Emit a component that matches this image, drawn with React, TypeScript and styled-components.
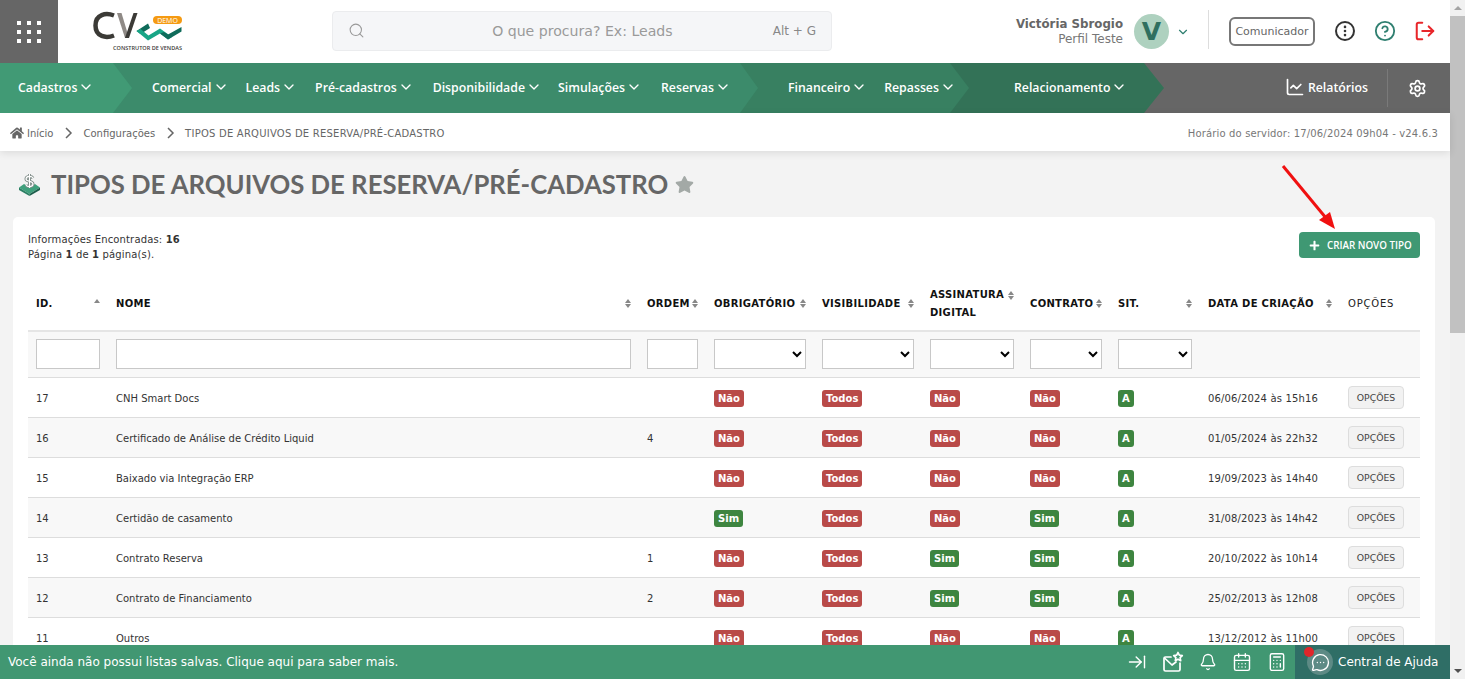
import React from "react";
import styled, { createGlobalStyle } from "styled-components";
import {
  ArrowRightToLine,
  Bell,
  Calculator,
  CalendarDays,
  ChartLine,
  ChevronDown,
  CircleHelp,
  EllipsisVertical,
  LogOut,
  MessageCircleMore,
  Search,
  Settings,
} from "lucide-react";
import { FaHome, FaPlus, FaStar } from "react-icons/fa";

const Global = createGlobalStyle`
  html, body { margin: 0; padding: 0; height: 100%; overflow: hidden; }
  body { font-family: "DejaVu Sans", Verdana, sans-serif; color: #333; }
  * { box-sizing: border-box; }
`;

const Shell = styled.div`
  display: flex;
  width: 1465px;
  height: 679px;
  overflow: hidden;
`;

const Page = styled.div`
  width: 1450px;
  height: 679px;
  display: flex;
  flex-direction: column;
  background: #f3f3f3;
`;

const ScrollTrack = styled.div`
  width: 15px;
  background: #f1f1f1;
  display: flex;
  flex-direction: column;
  align-items: center;
`;

const ScrollButton = styled.div<{ $down?: boolean }>`
  height: 16px;
  width: 15px;
  display: flex;
  align-items: center;
  justify-content: center;
  flex: none;
  margin-top: ${(p) => (p.$down ? "330px" : "0")};
  &::before {
    content: "";
    border-left: 4px solid transparent;
    border-right: 4px solid transparent;
    border-${(p) => (p.$down ? "top" : "bottom")}: 4px solid ${(p) => (p.$down ? "#505050" : "#a3a3a3")};
  }
`;

const ScrollThumb = styled.div`
  width: 15px;
  height: 317px;
  flex: none;
  background: #c1c1c1;
`;

const TopBar = styled.header`
  height: 63px;
  flex: none;
  display: flex;
  align-items: center;
  background: #fff;
`;

const GridButton = styled.div`
  width: 58px;
  height: 63px;
  flex: none;
  background: #666;
  display: grid;
  grid-template-columns: repeat(3, 4px);
  grid-auto-rows: 4px;
  gap: 5px 6px;
  align-content: center;
  justify-content: center;
`;

const GridDot = styled.span`
  background: #fff;
`;

const LogoBox = styled.div`
  width: 274px;
  flex: none;
  padding-left: 30px;
  display: flex;
`;

const SearchBox = styled.div`
  width: 500px;
  height: 40px;
  flex: none;
  margin-top: -2px;
  display: flex;
  align-items: center;
  padding: 0 15px;
  background: #f5f6f8;
  border: 1px solid #ebecee;
  border-radius: 4px;
  color: #999;
`;

const SearchText = styled.span`
  flex: 1;
  text-align: center;
  font-size: 14.1px;
  padding-left: 27px;
  color: #9a9a9a;
`;

const SearchKey = styled.span`
  font-size: 12px;
  color: #888;
`;

const UserArea = styled.div`
  flex: 1;
  display: flex;
  align-items: center;
  justify-content: flex-end;
  padding-right: 14px;
`;

const UserText = styled.div`
  text-align: right;
  line-height: 15px;
`;

const UserName = styled.div`
  font-size: 11.8px;
  font-weight: 700;
  color: #666;
`;

const UserRole = styled.div`
  font-size: 12px;
  color: #777;
`;

const Avatar = styled.div`
  width: 35px;
  height: 35px;
  border-radius: 50%;
  margin: 0 7px 0 11px;
  background: #aed1bf;
  color: #2f6f5f;
  font-size: 25px;
  font-weight: 700;
  display: flex;
  align-items: center;
  justify-content: center;
`;

const Divider = styled.div`
  width: 1px;
  height: 39px;
  background: #ddd;
  margin: -4px 20px 0 18px;
`;

const ComButton = styled.div`
  width: 86px;
  height: 29px;
  border: 2px solid #777;
  border-radius: 6px;
  color: #666;
  font-size: 11px;
  display: flex;
  align-items: center;
  justify-content: center;
  white-space: nowrap;
`;

const IconRow = styled.div`
  display: flex;
  align-items: center;
  gap: 18px;
  margin: -2px 0 0 19px;
`;

const DotsCircle = styled.div`
  width: 20px;
  height: 20px;
  margin: 0 1px;
  border: 2px solid #333;
  border-radius: 50%;
  display: flex;
  align-items: center;
  justify-content: center;
  color: #333;
`;

const NavBar = styled.nav`
  height: 50px;
  flex: none;
  display: flex;
  background: #666;
  color: #fff;
`;

const NavSegment = styled.div<{ $width: number; $pad: number; $bg: string; $tip: number; $z: number }>`
  position: relative;
  z-index: ${(p) => p.$z};
  width: ${(p) => p.$width}px;
  flex: none;
  padding-left: ${(p) => p.$pad}px;
  padding-bottom: 2px;
  background: ${(p) => p.$bg};
  display: flex;
  align-items: center;
  &::after {
    content: "";
    position: absolute;
    left: 100%;
    top: 0;
    border-top: 25px solid transparent;
    border-bottom: 25px solid transparent;
    border-left: ${(p) => p.$tip}px solid ${(p) => p.$bg};
  }
`;

const NavItem = styled.div<{ $mr?: number }>`
  display: flex;
  flex: none;
  align-items: center;
  margin-right: ${(p) => p.$mr ?? 0}px;
  font-family: "Open Sans", sans-serif;
  font-size: 12.3px;
  font-weight: 600;
  white-space: nowrap;
  position: relative;
  z-index: 1;
  svg {
    flex: none;
    margin: 0 -1px 0 1px;
  }
`;

const NavRight = styled.div`
  flex: 1;
  display: flex;
  justify-content: flex-end;
  align-items: center;
`;

const ReportLink = styled.div`
  display: flex;
  align-items: center;
  gap: 3px;
  padding: 0 19px 2px 0;
  font-family: "Open Sans", sans-serif;
  font-size: 12.3px;
  font-weight: 600;
`;

const SettingsCell = styled.div`
  width: 63px;
  height: 38px;
  border-left: 1px solid #7a7a7a;
  padding-right: 3px;
  display: flex;
  align-items: center;
  justify-content: center;
`;

const Crumbs = styled.div`
  height: 38px;
  flex: none;
  position: relative;
  z-index: 2;
  display: flex;
  align-items: center;
  padding: 2px 12px 0 10px;
  background: #fff;
  box-shadow: 0 2px 8px rgba(0, 0, 0, 0.1);
  font-size: 10px;
  color: #666;
`;

const CrumbSep = styled.span`
  display: inline-flex;
  margin: 0 9px;
  color: #666;
`;

const CrumbHome = styled.span`
  display: inline-flex;
  margin-right: 3px;
  color: #666;
`;

const CrumbTitle = styled.span`
  letter-spacing: 0.23px;
`;

const ServerTime = styled.span`
  margin-left: auto;
  letter-spacing: 0.15px;
  color: #777;
`;

const Content = styled.main`
  flex: 1;
  min-height: 0;
  overflow: hidden;
  position: relative;
  padding: 0 15px 0 13px;
`;

const TitleRow = styled.div`
  height: 66px;
  display: flex;
  align-items: center;
  padding: 0 0 0 5px;
`;

const Title = styled.h1`
  margin: 0 7px 0 10px;
  font-family: Lato, sans-serif;
  font-size: 25.7px;
  font-weight: 700;
  color: #666;
  white-space: nowrap;
`;

const StarMark = styled.span`
  display: inline-flex;
  color: #a3a9a6;
`;

const Card = styled.section`
  background: #fff;
  border-radius: 5px 5px 0 0;
  padding: 15px;
`;

const CardTop = styled.div`
  height: 45px;
  display: flex;
  justify-content: space-between;
  align-items: flex-start;
`;

const Info = styled.div`
  font-size: 10px;
  letter-spacing: 0.15px;
  line-height: 15px;
  color: #333;
`;

const CreateButton = styled.div`
  width: 121px;
  height: 26px;
  background: #3f9873;
  border-radius: 4px;
  color: #fff;
  display: flex;
  align-items: center;
  gap: 7px;
  padding-left: 10px;
  font-family: "Open Sans", sans-serif;
  font-size: 9.8px;
  font-weight: 600;
  white-space: nowrap;
`;

const Table = styled.table`
  width: 1392px;
  table-layout: fixed;
  border-collapse: collapse;
  font-size: 10px;
`;

const Th = styled.th<{ $muted?: boolean }>`
  height: 54px;
  padding: 0 8px;
  text-align: left;
  font-size: 10px;
  line-height: 18px;
  font-weight: ${(p) => (p.$muted ? 400 : 700)};
  letter-spacing: ${(p) => (p.$muted ? "0.8px" : "0.3px")};
  color: ${(p) => (p.$muted ? "#222" : "#111")};
  border-bottom: 2px solid #e5e5e5;
`;

const ThInner = styled.div<{ $top?: boolean }>`
  display: flex;
  justify-content: space-between;
  align-items: ${(p) => (p.$top ? "flex-start" : "center")};
`;

const SortMark = styled.span<{ $onlyUp?: boolean; $top?: boolean }>`
  display: inline-flex;
  flex-direction: column;
  gap: 1px;
  flex: none;
  margin-top: ${(p) => (p.$top ? "5px" : "0")};
  &::before {
    content: "";
    border-left: 3px solid transparent;
    border-right: 3px solid transparent;
    border-bottom: 4px solid #888;
  }
  &::after {
    content: "";
    border-left: 3px solid transparent;
    border-right: 3px solid transparent;
    border-top: 4px solid ${(p) => (p.$onlyUp ? "transparent" : "#888")};
  }
`;

const FilterRow = styled.tr`
  background: #f8f8f8;
`;

const FilterCell = styled.td`
  height: 46px;
  padding: 0 8px;
  border-bottom: 1px solid #ddd;
`;

const FilterInput = styled.input`
  display: block;
  width: 100%;
  height: 30px;
  padding: 0 4px;
  background: #fff;
  border: 1px solid #c8c8c8;
`;

const FilterSelect = styled.select`
  display: block;
  width: 100%;
  height: 30px;
  background: #fff;
  border: 1px solid #c8c8c8;
  border-radius: 0;
`;

const Row = styled.tr<{ $odd: boolean }>`
  background: ${(p) => (p.$odd ? "#f8f8f8" : "#fff")};
`;

const Td = styled.td`
  height: 40px;
  padding: 2px 8px 0;
  border-bottom: 1px solid #ddd;
  color: #333;
  white-space: nowrap;
`;

const DateText = styled.span`
  letter-spacing: 0.15px;
`;

const Badge = styled.span<{ $tone: "red" | "green" }>`
  display: inline-block;
  height: 17px;
  line-height: 17px;
  padding: 0 4px;
  border-radius: 3px;
  background: ${(p) => (p.$tone === "red" ? "#b94a48" : "#3e8540")};
  color: #fff;
  font-size: 10px;
  font-weight: 700;
  vertical-align: middle;
`;

const OptionsButton = styled.div`
  width: 56px;
  height: 23px;
  background: #f2f2f2;
  border: 1px solid #ddd;
  border-radius: 4px;
  color: #444;
  font-size: 9.3px;
  display: flex;
  align-items: center;
  justify-content: center;
  margin-top: -2px;
`;

const RedArrow = styled.svg`
  position: absolute;
  left: 1280px;
  top: 14px;
  pointer-events: none;
`;

const BottomBar = styled.footer`
  height: 34px;
  flex: none;
  display: flex;
  align-items: center;
  background: #419772;
  color: #fff;
`;

const SavedLists = styled.div`
  flex: 1;
  padding-left: 8px;
  font-size: 12px;
  white-space: nowrap;
`;

const BarIcons = styled.div`
  display: flex;
  align-items: center;
  gap: 15px;
  padding-right: 8px;
`;

const HelpBlock = styled.div`
  width: 155px;
  height: 34px;
  flex: none;
  position: relative;
  display: flex;
  align-items: center;
  gap: 5px;
  padding-left: 12px;
  background: #2f6e66;
  font-size: 12px;
  white-space: nowrap;
`;

const HelpCircle = styled.div`
  width: 26px;
  height: 26px;
  border-radius: 50%;
  background: #5d8a85;
  display: flex;
  align-items: center;
  justify-content: center;
`;

const RedDot = styled.span`
  position: absolute;
  left: 9px;
  top: 2px;
  width: 10px;
  height: 10px;
  border-radius: 50%;
  background: #e0262a;
`;

const Logo = () => (
  <svg width="100" height="46" viewBox="88 8 100 46" style={{ display: "block", marginTop: -2 }}>
    <path d="M114 15.500 C106 12.500 95.500 14 95.500 25.500 C95.500 37 106 38.500 114 35.500" fill="none" stroke="#3b3a36" strokeWidth="4.500" />
    <path d="M117 13 L125 38 L129 38 L121.500 13 Z" fill="#8f8a86" />
    <path d="M125 38 L129 38 L137.500 13 L133.500 13 Z" fill="#3b3a36" />
    <path d="M148 23.500 L136.500 31 L140.500 34 L150 28 Z" fill="#0f6b5a" />
    <path d="M136.500 31 L148 40.500 L160 33.500 L168 39.500 L172 37 L160 28.500 L148.500 35.500 L140.500 29 Z" fill="#17a586" />
    <path d="M168 39.500 L181.500 31.500 L181.500 27 L168 34.500 L164 32 L160 33.500 Z" fill="#0f6b5a" />
    <rect x="153" y="16" width="29" height="8" rx="4" fill="#f59a12" />
    <text x="167.500" y="22.700" textAnchor="middle" fontSize="7" fill="#fff" fontFamily="Open Sans, sans-serif">DEMO</text>
    <text x="113" y="49.500" textLength="69" lengthAdjust="spacingAndGlyphs" fontSize="5.500" fill="#3b3a36" fontFamily="Open Sans, sans-serif" fontWeight="600">CONSTRUTOR DE VENDAS</text>
  </svg>
);

const PageIcon = () => (
  <svg width="23" height="24" viewBox="0 0 23 24" style={{ display: "block" }}>
    <path d="M1 15.500 L6 12 L11.500 15 L17 12 L22 15.500 L11.500 22 Z" fill="#3fa07c" />
    <path d="M1 15.500 L11.500 22 L11.500 24 L1 18 Z" fill="#2a7f63" />
    <path d="M22 15.500 L11.500 22 L11.500 24 L22 18 Z" fill="#1d5f4c" />
    <path d="M15 6 C13.500 3.500 8 4 8 7 C8 10 15 8.500 15 12 C15 15 9.500 15.500 8 13 M11.500 2 L11.500 16" fill="none" stroke="#7d8a86" strokeWidth="3" />
    <path d="M15 6 C13.500 3.500 8 4 8 7 C8 10 15 8.500 15 12 C15 15 9.500 15.500 8 13 M11.500 2 L11.500 16" fill="none" stroke="#fff" strokeWidth="1.200" />
  </svg>
);

const MailStar = () => (
  <svg width="22" height="22" viewBox="0 0 22 22" fill="none" stroke="#fff" strokeWidth="1.700" strokeLinejoin="round" strokeLinecap="round">
    <path d="M9 6 H3.500 A1.500 1.500 0 0 0 2 7.500 V18.500 A1.500 1.500 0 0 0 3.500 20 H16.500 A1.500 1.500 0 0 0 18 18.500 V12" />
    <path d="M2.500 7 L10 14 L14 11" />
    <path d="M16 1.500 L17.300 4.200 L20.300 4.600 L18.100 6.700 L18.700 9.700 L16 8.200 L13.300 9.700 L13.900 6.700 L11.700 4.600 L14.700 4.200 Z" />
  </svg>
);

const CrumbChevron = () => (
  <svg width="12" height="12" viewBox="0 0 12 12" fill="none" stroke="#666" strokeWidth="1.500">
    <path d="M4 1 L9 6 L4 11" />
  </svg>
);

type RowData = {
  id: number;
  name: string;
  order: string;
  required: string;
  signature: string;
  contract: string;
  created: string;
};

const rows: RowData[] = [
  { id: 17, name: "CNH Smart Docs", order: "", required: "Não", signature: "Não", contract: "Não", created: "06/06/2024 às 15h16" },
  { id: 16, name: "Certificado de Análise de Crédito Liquid", order: "4", required: "Não", signature: "Não", contract: "Não", created: "01/05/2024 às 22h32" },
  { id: 15, name: "Baixado via Integração ERP", order: "", required: "Não", signature: "Não", contract: "Não", created: "19/09/2023 às 14h40" },
  { id: 14, name: "Certidão de casamento", order: "", required: "Sim", signature: "Não", contract: "Sim", created: "31/08/2023 às 14h42" },
  { id: 13, name: "Contrato Reserva", order: "1", required: "Não", signature: "Sim", contract: "Sim", created: "20/10/2022 às 10h14" },
  { id: 12, name: "Contrato de Financiamento", order: "2", required: "Não", signature: "Sim", contract: "Sim", created: "25/02/2013 às 12h08" },
  { id: 11, name: "Outros", order: "", required: "Não", signature: "Não", contract: "Não", created: "13/12/2012 às 11h00" },
];

const colWidths = [80, 531, 67, 108, 108, 100, 88, 90, 140, 80];

const YesNo = ({ value }: { value: string }) => <Badge $tone={value === "Sim" ? "green" : "red"}>{value}</Badge>;

const NavLink = ({ label, mr }: { label: string; mr?: number }) => (
  <NavItem $mr={mr}>
    {label}
    <ChevronDown size={16} strokeWidth={2} />
  </NavItem>
);

export default function App() {
  return (
    <Shell>
      <Global />
      <Page>
        <TopBar>
          <GridButton>
            {Array.from({ length: 9 }, (_, i) => (
              <GridDot key={i} />
            ))}
          </GridButton>
          <LogoBox>
            <Logo />
          </LogoBox>
          <SearchBox>
            <Search size={17} strokeWidth={1.5} />
            <SearchText>O que procura? Ex: Leads</SearchText>
            <SearchKey>Alt + G</SearchKey>
          </SearchBox>
          <UserArea>
            <UserText>
              <UserName>Victória Sbrogio</UserName>
              <UserRole>Perfil Teste</UserRole>
            </UserText>
            <Avatar>V</Avatar>
            <ChevronDown size={14} color="#2f7f70" strokeWidth={2} />
            <Divider />
            <ComButton>Comunicador</ComButton>
            <IconRow>
              <DotsCircle>
                <EllipsisVertical size={14} strokeWidth={2.5} />
              </DotsCircle>
              <CircleHelp size={22} color="#2f7f70" strokeWidth={2} />
              <LogOut size={22} color="#e8262a" strokeWidth={2.2} />
            </IconRow>
          </UserArea>
        </TopBar>

        <NavBar>
          <NavSegment $width={113} $pad={18} $bg="#419a75" $tip={19} $z={4}>
            <NavLink label="Cadastros" />
          </NavSegment>
          <NavSegment $width={627} $pad={39} $bg="#3c8b6b" $tip={18} $z={3}>
            <NavLink label="Comercial" mr={18} />
            <NavLink label="Leads" mr={19} />
            <NavLink label="Pré-cadastros" mr={20} />
            <NavLink label="Disponibilidade" mr={17} />
            <NavLink label="Simulações" mr={20} />
            <NavLink label="Reservas" />
          </NavSegment>
          <NavSegment $width={210} $pad={48} $bg="#388061" $tip={19} $z={2}>
            <NavLink label="Financeiro" mr={18} />
            <NavLink label="Repasses" />
          </NavSegment>
          <NavSegment $width={194} $pad={64} $bg="#337257" $tip={20} $z={1}>
            <NavLink label="Relacionamento" />
          </NavSegment>
          <NavRight>
            <ReportLink>
              <ChartLine size={20} strokeWidth={2} />
              Relatórios
            </ReportLink>
            <SettingsCell>
              <Settings size={19} strokeWidth={2.2} />
            </SettingsCell>
          </NavRight>
        </NavBar>

        <Crumbs>
          <CrumbHome>
            <FaHome size={14} />
          </CrumbHome>
          Início
          <CrumbSep>
            <CrumbChevron />
          </CrumbSep>
          Configurações
          <CrumbSep>
            <CrumbChevron />
          </CrumbSep>
          <CrumbTitle>TIPOS DE ARQUIVOS DE RESERVA/PRÉ-CADASTRO</CrumbTitle>
          <ServerTime>Horário do servidor: 17/06/2024 09h04 - v24.6.3</ServerTime>
        </Crumbs>

        <Content>
          <TitleRow>
            <PageIcon />
            <Title>TIPOS DE ARQUIVOS DE RESERVA/PRÉ-CADASTRO</Title>
            <StarMark>
              <FaStar size={19} />
            </StarMark>
          </TitleRow>

          <Card>
            <CardTop>
              <Info>
                Informações Encontradas: <b>16</b>
                <br />
                Página <b>1</b> de <b>1</b> página(s).
              </Info>
              <CreateButton>
                <FaPlus size={11} />
                CRIAR NOVO TIPO
              </CreateButton>
            </CardTop>

            <Table>
              <colgroup>
                {colWidths.map((w, i) => (
                  <col key={i} style={{ width: w }} />
                ))}
              </colgroup>
              <thead>
                <tr>
                  <Th>
                    <ThInner>
                      ID.
                      <SortMark $onlyUp />
                    </ThInner>
                  </Th>
                  <Th>
                    <ThInner>
                      NOME
                      <SortMark />
                    </ThInner>
                  </Th>
                  <Th>
                    <ThInner>
                      ORDEM
                      <SortMark />
                    </ThInner>
                  </Th>
                  <Th>
                    <ThInner>
                      OBRIGATÓRIO
                      <SortMark />
                    </ThInner>
                  </Th>
                  <Th>
                    <ThInner>
                      VISIBILIDADE
                      <SortMark />
                    </ThInner>
                  </Th>
                  <Th>
                    <ThInner $top>
                      <span>
                        ASSINATURA
                        <br />
                        DIGITAL
                      </span>
                      <SortMark $top />
                    </ThInner>
                  </Th>
                  <Th>
                    <ThInner>
                      CONTRATO
                      <SortMark />
                    </ThInner>
                  </Th>
                  <Th>
                    <ThInner>
                      SIT.
                      <SortMark />
                    </ThInner>
                  </Th>
                  <Th>
                    <ThInner>
                      DATA DE CRIAÇÃO
                      <SortMark />
                    </ThInner>
                  </Th>
                  <Th $muted>OPÇÕES</Th>
                </tr>
                <FilterRow>
                  <FilterCell>
                    <FilterInput />
                  </FilterCell>
                  <FilterCell>
                    <FilterInput />
                  </FilterCell>
                  <FilterCell>
                    <FilterInput />
                  </FilterCell>
                  {[0, 1, 2, 3, 4].map((i) => (
                    <FilterCell key={i}>
                      <FilterSelect />
                    </FilterCell>
                  ))}
                  <FilterCell />
                  <FilterCell />
                </FilterRow>
              </thead>
              <tbody>
                {rows.map((r, i) => (
                  <Row key={r.id} $odd={i % 2 === 1}>
                    <Td>{r.id}</Td>
                    <Td>{r.name}</Td>
                    <Td>{r.order}</Td>
                    <Td>
                      <YesNo value={r.required} />
                    </Td>
                    <Td>
                      <Badge $tone="red">Todos</Badge>
                    </Td>
                    <Td>
                      <YesNo value={r.signature} />
                    </Td>
                    <Td>
                      <YesNo value={r.contract} />
                    </Td>
                    <Td>
                      <Badge $tone="green">A</Badge>
                    </Td>
                    <Td>
                      <DateText>{r.created}</DateText>
                    </Td>
                    <Td>
                      <OptionsButton>OPÇÕES</OptionsButton>
                    </Td>
                  </Row>
                ))}
              </tbody>
            </Table>
          </Card>

          <RedArrow width="60" height="68" viewBox="0 0 60 68">
            <path d="M3 1 L46 53" stroke="#f01010" strokeWidth="3" fill="none" />
            <path d="M55 64 L39 55 L50 47 Z" fill="#f01010" />
          </RedArrow>
        </Content>

        <BottomBar>
          <SavedLists>Você ainda não possui listas salvas. Clique aqui para saber mais.</SavedLists>
          <BarIcons>
            <ArrowRightToLine size={20} strokeWidth={1.7} />
            <MailStar />
            <Bell size={18} strokeWidth={1.7} />
            <CalendarDays size={20} strokeWidth={1.7} />
            <Calculator size={20} strokeWidth={1.7} />
          </BarIcons>
          <HelpBlock>
            <RedDot />
            <HelpCircle>
              <MessageCircleMore size={19} strokeWidth={1.7} />
            </HelpCircle>
            Central de Ajuda
          </HelpBlock>
        </BottomBar>
      </Page>

      <ScrollTrack>
        <ScrollButton />
        <ScrollThumb />
        <ScrollButton $down />
      </ScrollTrack>
    </Shell>
  );
}
